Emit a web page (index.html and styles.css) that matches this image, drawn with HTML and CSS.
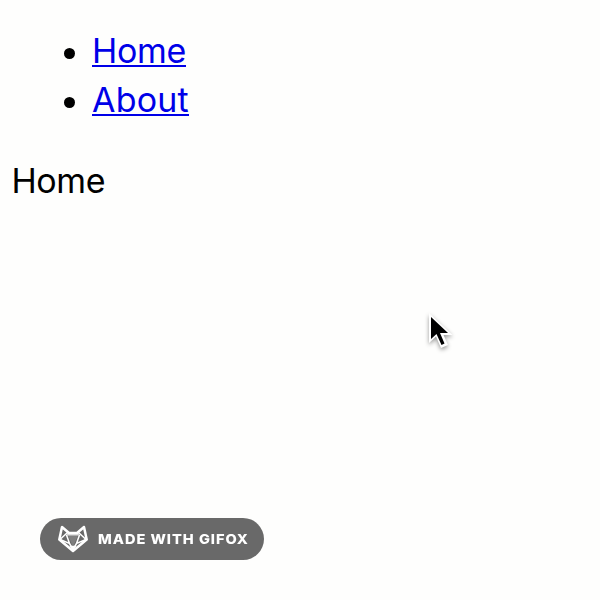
FILE: index.html
```html
<!DOCTYPE html>
<html lang="en">
<head>
<meta charset="utf-8">
<title>Home</title>
<link rel="stylesheet" href="styles.css">
</head>
<body>
<nav>
<ul class="links">
<li><a href="#home">Home</a></li>
<li><a class="about" href="#about">About</a></li>
</ul>
</nav>
<main class="page">Home</main>
<svg class="cursor" width="36" height="44" viewBox="0 0 36 44">
<path d="M5 4v30l7-6.500 5 11.500 7-3-4.500-10h9z" fill="#fff"/>
<path d="M7 8v22l5.500-5 5 11 3-1.500-4.500-10.500h8z" fill="#000"/>
</svg>
<div class="badge">
<svg class="fox" width="32" height="30" viewBox="0 0 32 30">
<path d="M10 9h12l-6 14z" fill="#fff" opacity=".15"/>
<path d="M11 8.500h10l2 3H9z" fill="#fff" opacity=".7"/>
<path d="M5 3L2.300 15.500 16 27l13.700-11.500L27 3l-7 6h-8z" fill="none" stroke="#fff" stroke-width="2.500" stroke-linejoin="round"/>
<path d="M10.500 8.500L3 15.500l9.500 4L9.500 11M21.500 8.500l7.500 7-9.500 4 3-8.500M12.500 19.500l3.500 6 3.500-6" fill="none" stroke="#fff" stroke-width="1.500"/>
<path d="M12.500 21.800h7L16 27z" fill="#fff"/>
</svg>
<span class="label">MADE WITH GIFOX</span>
</div>
</body>
</html>
```
FILE: styles.css
```css
body {
  margin: 0;
  height: 600px;
  overflow: hidden;
  background: #fefefd;
  color: #000;
  font-family: Inter, "Liberation Sans", sans-serif;
  font-size: 34px;
  font-weight: 400;
  line-height: 49px;
}
.links {
  margin: 0;
  padding: 26px 0 0 92px;
  list-style: none;
}
.links li {
  display: flex;
}
.links li::before {
  content: "";
  width: 11px;
  height: 11px;
  margin: 21.500px 17px 0 -28px;
  border-radius: 50%;
  background: #000;
}
.links a {
  height: 39px;
  margin-bottom: 8px;
  border-bottom: 2px solid #0000e8;
  color: #0000e8;
  text-decoration: none;
  letter-spacing: -0.3px;
}
.links .about {
  letter-spacing: 0.2px;
}
.page {
  padding: 32px 11.500px 0;
  letter-spacing: -0.4px;
}
.cursor {
  position: absolute;
  left: 424px;
  top: 309px;
  filter: drop-shadow(0 2px 2px rgba(0, 0, 0, .4));
}
.badge {
  position: absolute;
  left: 40px;
  top: 518px;
  display: flex;
  align-items: center;
  width: 224px;
  height: 42px;
  border-radius: 21px;
  background: #696969;
  color: #fff;
}
.fox {
  flex: none;
  margin: 0 9px 0 17px;
}
.label {
  font-size: 13.500px;
  font-weight: 800;
  line-height: 42px;
  letter-spacing: 0.9px;
  transform: scaleX(1.08);
  transform-origin: left;
  white-space: nowrap;
}
```
